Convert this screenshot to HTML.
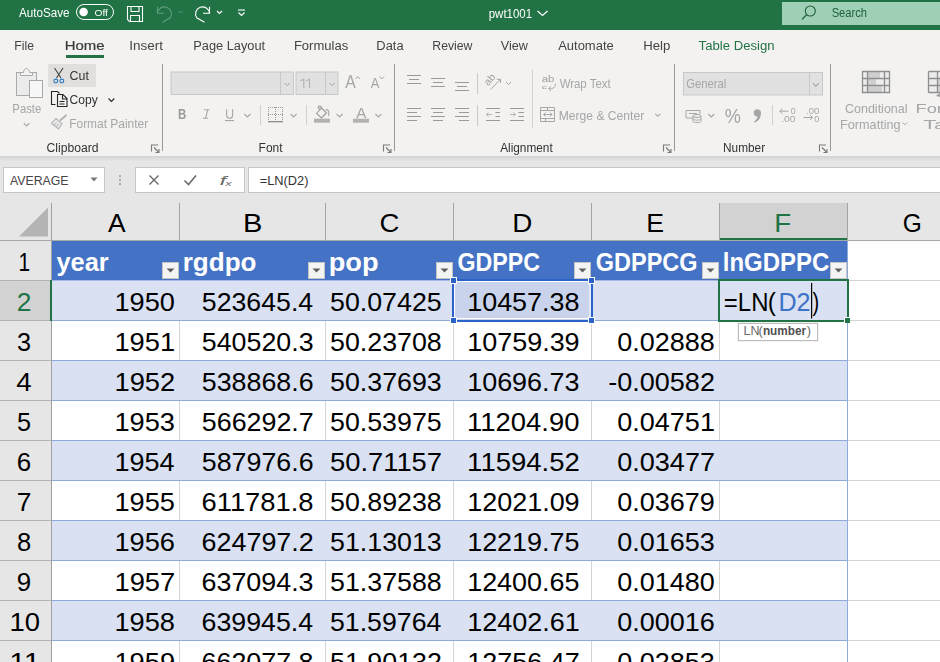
<!DOCTYPE html>
<html><head><meta charset="utf-8"><style>
html,body{margin:0;padding:0;width:940px;height:662px;overflow:hidden;background:#e6e6e6}
svg{display:block}
text{font-family:"Liberation Sans",sans-serif}
</style></head><body>
<svg width="940" height="662" viewBox="0 0 940 662">
<defs><filter id="gs" x="0" y="0" width="940" height="160" filterUnits="userSpaceOnUse"><feColorMatrix type="identity"/></filter><linearGradient id="shad" x1="0" y1="0" x2="0" y2="1"><stop offset="0" stop-color="#d2d2d2"/><stop offset="1" stop-color="#e6e6e6"/></linearGradient></defs>
<g filter="url(#gs)">
<rect x="0" y="0" width="940" height="30" fill="#217346" />
<text x="18.97" y="17.00" font-size="12.51" textLength="50.54" lengthAdjust="spacingAndGlyphs" fill="#fff" >AutoSave</text>
<rect x="76.5" y="4.5" width="37" height="15" rx="7.5" fill="none" stroke="#fff" stroke-width="1"/>
<circle cx="83.6" cy="12" r="4.3" fill="#fff"/>
<text x="94.51" y="16.00" font-size="9.60" textLength="13.47" lengthAdjust="spacingAndGlyphs" fill="#fff" >Off</text>
<path d="M127.5 6.5 H142.5 V21.5 H129.5 L127.5 19.5 Z" stroke="#fff" fill="none" stroke-width="1.1" />
<path d="M131 6.5 V11.5 H139 V6.5" stroke="#fff" fill="none" stroke-width="1.1" />
<path d="M130.5 21.5 V15.5 H139.5 V21.5" stroke="#fff" fill="none" stroke-width="1.1" />
<path d="M157.5 6.7 V13.3 H164 M157.5 13.3 A7 7 0 1 1 170.3 17.8 L162.5 22.3" stroke="#5f9f7a" fill="none" stroke-width="1.1" />
<path d="M178.5 11 L180.5 13 L182.5 11" stroke="#5f9f7a" fill="none" stroke-width="1" />
<path d="M209.5 6.7 V13.3 H203 M209.5 13.3 A7 7 0 1 0 196.7 17.8 L204.5 22.3" stroke="#fff" fill="none" stroke-width="1.1" />
<path d="M217 11 L219.5 13.5 L222 11" stroke="#fff" fill="none" stroke-width="1.2" />
<path d="M238 10 H245" stroke="#fff" fill="none" stroke-width="1.1" />
<path d="M238.5 12.5 L241.5 15.5 L244.5 12.5" stroke="#fff" fill="none" stroke-width="1.1" />
<text x="488.76" y="18.00" font-size="13.24" textLength="43.30" lengthAdjust="spacingAndGlyphs" fill="#fff" >pwt1001</text>
<path d="M537.5 11 L542.5 15.5 L547.5 11" stroke="#fff" fill="none" stroke-width="1.2" />
<rect x="782" y="2" width="158" height="23" fill="#9fcfb4" />
<circle cx="810.3" cy="11" r="5" fill="none" stroke="#1c5e3a" stroke-width="1.1"/>
<path d="M806.8 14.5 L802 19.3" stroke="#1c5e3a" fill="none" stroke-width="1.2" />
<text x="831.70" y="17.20" font-size="13.09" textLength="35.31" lengthAdjust="spacingAndGlyphs" fill="#1c5e3a" >Search</text>
<rect x="0" y="30" width="940" height="126" fill="#f3f2f1" />
<text x="14.29" y="49.80" font-size="13.09" textLength="19.64" lengthAdjust="spacingAndGlyphs" fill="#444444" >File</text>
<text x="64.77" y="49.80" font-size="13.09" textLength="39.87" lengthAdjust="spacingAndGlyphs" fill="#3a3a3a" stroke="#3a3a3a" stroke-width="0.2">Home</text>
<text x="129.35" y="49.80" font-size="13.09" textLength="33.76" lengthAdjust="spacingAndGlyphs" fill="#444444" >Insert</text>
<text x="193.24" y="49.80" font-size="13.09" textLength="71.86" lengthAdjust="spacingAndGlyphs" fill="#444444" >Page Layout</text>
<text x="293.92" y="49.80" font-size="13.09" textLength="54.33" lengthAdjust="spacingAndGlyphs" fill="#444444" >Formulas</text>
<text x="376.34" y="49.80" font-size="13.09" textLength="27.26" lengthAdjust="spacingAndGlyphs" fill="#444444" >Data</text>
<text x="432.29" y="49.80" font-size="13.09" textLength="40.17" lengthAdjust="spacingAndGlyphs" fill="#444444" >Review</text>
<text x="500.74" y="49.80" font-size="13.09" textLength="27.23" lengthAdjust="spacingAndGlyphs" fill="#444444" >View</text>
<text x="558.17" y="49.80" font-size="13.09" textLength="55.59" lengthAdjust="spacingAndGlyphs" fill="#444444" >Automate</text>
<text x="643.21" y="49.80" font-size="13.09" textLength="27.14" lengthAdjust="spacingAndGlyphs" fill="#444444" >Help</text>
<text x="698.60" y="49.80" font-size="13.09" textLength="75.94" lengthAdjust="spacingAndGlyphs" fill="#217346" >Table Design</text>
<rect x="66" y="55" width="38" height="3" fill="#217346" />
<rect x="16.5" y="72.5" width="20" height="23" fill="#ebebeb" stroke="#a9a9a9" stroke-width="1"/>
<path d="M20.5 75.5 V72.5 H23.5 C23.5 70.3 24.8 68.5 26.5 68.5 C28.2 68.5 29.5 70.3 29.5 72.5 H32.5 V75.5 Z" stroke="#a9a9a9" fill="#f4f4f4" stroke-width="1" />
<rect x="29.5" y="80.5" width="13" height="17" fill="#f7f7f7" stroke="#a9a9a9" stroke-width="1"/>
<text x="12.37" y="113.00" font-size="12.22" textLength="28.94" lengthAdjust="spacingAndGlyphs" fill="#a6a6a6" >Paste</text>
<path d="M23.8 123.2 L26.6 126 L29.4 123.2" stroke="#a6a6a6" fill="none" stroke-width="1.1" />
<rect x="48" y="64" width="48" height="23" fill="#e1dfdd" />
<path d="M54.5 68 L61 78 M63 68 L56.5 78" stroke="#444" fill="none" stroke-width="1.1" />
<circle cx="55.8" cy="81" r="1.9" fill="none" stroke="#2b79c2" stroke-width="1.1"/>
<circle cx="61.8" cy="81" r="1.9" fill="none" stroke="#2b79c2" stroke-width="1.1"/>
<text x="69.58" y="80.40" font-size="12.95" textLength="19.33" lengthAdjust="spacingAndGlyphs" fill="#333333" >Cut</text>
<path d="M55.5 104.5 H51.5 V91.5 H57.5 L59.5 93.5" stroke="#262626" fill="none" stroke-width="1.1" />
<path d="M57.5 94.5 H63 L67 98.5 V106.5 H57.5 Z M62.5 94.5 V99 H67 M59.5 101.5 H64.5 M59.5 104 H64.5" stroke="#262626" fill="none" stroke-width="1.1" />
<text x="69.60" y="103.90" font-size="12.65" textLength="28.23" lengthAdjust="spacingAndGlyphs" fill="#333333" >Copy</text>
<path d="M108.5 98.5 L111.4 101.4 L114.3 98.5" stroke="#262626" fill="none" stroke-width="1.1" />
<path d="M60 120.5 L66.5 115" stroke="#b3b3b3" fill="none" stroke-width="2" />
<path d="M56 118.5 L62 123.5 L58.5 129 L51.5 123.5 Z" stroke="#b3b3b3" fill="#e9e9e9" stroke-width="1.1" />
<path d="M54 125.5 L56.5 122.5 M56 127 L58.5 124" stroke="#b3b3b3" fill="none" stroke-width="1" />
<text x="69.21" y="128.40" font-size="12.65" textLength="78.98" lengthAdjust="spacingAndGlyphs" fill="#a6a6a6" >Format Painter</text>
<text x="46.59" y="152.40" font-size="12.51" textLength="51.97" lengthAdjust="spacingAndGlyphs" fill="#333333" >Clipboard</text>
<path d="M151.5 151.5 V145 H158.0 M154.0 147.5 L159.0 152.5 M159.0 149 V152.5 H155.5" stroke="#7a7a7a" fill="none" stroke-width="1.1" />
<line x1="162.5" y1="64" x2="162.5" y2="151" stroke="#9a9a9a" stroke-width="1" />
<rect x="171" y="72" width="122.5" height="22.5" fill="#e1e1e1" stroke="#c8c8c8" stroke-width="1"/>
<line x1="280.5" y1="72" x2="280.5" y2="94.5" stroke="#c8c8c8" stroke-width="1" />
<path d="M284.5 83 L287.2 85.7 L289.9 83" stroke="#a6a6a6" fill="none" stroke-width="1" />
<rect x="296" y="72" width="42" height="22.5" fill="#e1e1e1" stroke="#c8c8c8" stroke-width="1"/>
<line x1="325.5" y1="72" x2="325.5" y2="94.5" stroke="#c8c8c8" stroke-width="1" />
<path d="M329.5 83 L332.2 85.7 L334.9 83" stroke="#a6a6a6" fill="none" stroke-width="1" />
<path d="M300.5 80.8 L303.8 79.3 V88.1 M306.2 80.8 L309.5 79.3 V88.1" stroke="#b0b0b0" fill="none" stroke-width="1.1" />
<text x="345.36" y="87.90" font-size="18.76" textLength="10.47" lengthAdjust="spacingAndGlyphs" fill="#a6a6a6" >A</text>
<path d="M355.5 79 L357.7 76.5 L359.9 79" stroke="#a6a6a6" fill="none" stroke-width="1" />
<text x="370.67" y="87.90" font-size="14.11" textLength="8.66" lengthAdjust="spacingAndGlyphs" fill="#a6a6a6" >A</text>
<path d="M379.5 76.5 L381.8 79 L384.1 76.5" stroke="#a6a6a6" fill="none" stroke-width="1" />
<text x="178.03" y="118.70" font-size="13.96" textLength="8.29" lengthAdjust="spacingAndGlyphs" fill="#999999" font-weight="bold" >B</text>
<path d="M204.2 109.8 H209.4 M203 118.3 H208 M207.8 109.8 L205.4 118.3" stroke="#a6a6a6" fill="none" stroke-width="1.1" />
<path d="M226.6 109.3 V115.3 C226.6 117.3 227.9 118.3 229.6 118.3 C231.3 118.3 232.6 117.3 232.6 115.3 V109.3" stroke="#a6a6a6" fill="none" stroke-width="1.1" />
<rect x="225" y="120" width="9" height="1.1" fill="#a6a6a6" />
<path d="M244.4 114 L247.4 117 L250.4 114" stroke="#a6a6a6" fill="none" stroke-width="1.1" />
<line x1="260.5" y1="105" x2="260.5" y2="125" stroke="#d0d0d0" stroke-width="1" />
<rect x="268" y="107" width="1" height="1" fill="#9a9a9a" />
<rect x="268" y="114" width="1" height="1" fill="#9a9a9a" />
<rect x="270" y="107" width="1" height="1" fill="#9a9a9a" />
<rect x="270" y="114" width="1" height="1" fill="#9a9a9a" />
<rect x="272" y="107" width="1" height="1" fill="#9a9a9a" />
<rect x="272" y="114" width="1" height="1" fill="#9a9a9a" />
<rect x="274" y="107" width="1" height="1" fill="#9a9a9a" />
<rect x="274" y="114" width="1" height="1" fill="#9a9a9a" />
<rect x="276" y="107" width="1" height="1" fill="#9a9a9a" />
<rect x="276" y="114" width="1" height="1" fill="#9a9a9a" />
<rect x="278" y="107" width="1" height="1" fill="#9a9a9a" />
<rect x="278" y="114" width="1" height="1" fill="#9a9a9a" />
<rect x="280" y="107" width="1" height="1" fill="#9a9a9a" />
<rect x="280" y="114" width="1" height="1" fill="#9a9a9a" />
<rect x="282" y="107" width="1" height="1" fill="#9a9a9a" />
<rect x="282" y="114" width="1" height="1" fill="#9a9a9a" />
<rect x="268" y="107" width="1" height="1" fill="#9a9a9a" />
<rect x="275" y="107" width="1" height="1" fill="#9a9a9a" />
<rect x="282" y="107" width="1" height="1" fill="#9a9a9a" />
<rect x="268" y="109" width="1" height="1" fill="#9a9a9a" />
<rect x="275" y="109" width="1" height="1" fill="#9a9a9a" />
<rect x="282" y="109" width="1" height="1" fill="#9a9a9a" />
<rect x="268" y="111" width="1" height="1" fill="#9a9a9a" />
<rect x="275" y="111" width="1" height="1" fill="#9a9a9a" />
<rect x="282" y="111" width="1" height="1" fill="#9a9a9a" />
<rect x="268" y="113" width="1" height="1" fill="#9a9a9a" />
<rect x="275" y="113" width="1" height="1" fill="#9a9a9a" />
<rect x="282" y="113" width="1" height="1" fill="#9a9a9a" />
<rect x="268" y="115" width="1" height="1" fill="#9a9a9a" />
<rect x="275" y="115" width="1" height="1" fill="#9a9a9a" />
<rect x="282" y="115" width="1" height="1" fill="#9a9a9a" />
<rect x="268" y="117" width="1" height="1" fill="#9a9a9a" />
<rect x="275" y="117" width="1" height="1" fill="#9a9a9a" />
<rect x="282" y="117" width="1" height="1" fill="#9a9a9a" />
<rect x="268" y="119" width="1" height="1" fill="#9a9a9a" />
<rect x="275" y="119" width="1" height="1" fill="#9a9a9a" />
<rect x="282" y="119" width="1" height="1" fill="#9a9a9a" />
<rect x="268" y="121" width="15" height="1.3" fill="#8a8a8a" />
<path d="M290.6 114 L293.6 117 L296.6 114" stroke="#a6a6a6" fill="none" stroke-width="1.1" />
<line x1="306.5" y1="105" x2="306.5" y2="125" stroke="#d0d0d0" stroke-width="1" />
<path d="M316.5 113.5 L321.5 108 L326.5 113 L321.5 118 Z M320 109.5 L318.5 108 C317.5 107 319.5 105.5 320.5 106.5 L322 108" stroke="#9a9a9a" fill="none" stroke-width="1.1" />
<path d="M325.5 110 C327.5 109 329 110.5 328.8 113.5 L328.5 116" stroke="#a6a6a6" fill="none" stroke-width="1.1" />
<rect x="314" y="118.7" width="16" height="4" fill="#b3b0ad" />
<path d="M336.6 114 L339.6 117 L342.6 114" stroke="#a6a6a6" fill="none" stroke-width="1.1" />
<text x="356.26" y="118.00" font-size="15.27" textLength="10.07" lengthAdjust="spacingAndGlyphs" fill="#a6a6a6" >A</text>
<rect x="353" y="118.7" width="16" height="4" fill="#b3b0ad" />
<path d="M375.4 114 L378.4 117 L381.4 114" stroke="#a6a6a6" fill="none" stroke-width="1.1" />
<text x="258.61" y="152.40" font-size="12.51" textLength="23.99" lengthAdjust="spacingAndGlyphs" fill="#333333" >Font</text>
<path d="M383.5 151.5 V145 H390.0 M386.0 147.5 L391.0 152.5 M391.0 149 V152.5 H387.5" stroke="#7a7a7a" fill="none" stroke-width="1.1" />
<line x1="394.5" y1="64" x2="394.5" y2="151" stroke="#9a9a9a" stroke-width="1" />
<path d="M407 75.5 H421 M409 79.5 H419 M407 83.5 H421" stroke="#999999" fill="none" stroke-width="1" />
<path d="M431 78.5 H445 M433 82.5 H443 M431 86.5 H445" stroke="#999999" fill="none" stroke-width="1" />
<path d="M455 82.5 H469 M457 86.5 H467 M455 90.5 H469" stroke="#999999" fill="none" stroke-width="1" />
<line x1="477.5" y1="73" x2="477.5" y2="94" stroke="#c8c8c8" stroke-width="1" />
<text x="483.55" y="83.00" font-size="10.18" textLength="11.91" lengthAdjust="spacingAndGlyphs" fill="#a0a0a0" transform="rotate(-50 489.5 79.5)">ab</text>
<path d="M490.6 89.4 L500.5 79.3 M496.8 79.3 H500.5 V83" stroke="#a6a6a6" fill="none" stroke-width="1" />
<path d="M506 82 L508.5 84.5 L511 82" stroke="#a6a6a6" fill="none" stroke-width="1" />
<line x1="532.5" y1="70" x2="532.5" y2="128" stroke="#d0d0d0" stroke-width="1" />
<text x="541.71" y="82.20" font-size="8.15" textLength="12.77" lengthAdjust="spacingAndGlyphs" fill="#a0a0a0" >ab</text>
<text x="541.75" y="89.40" font-size="6.25" textLength="5.35" lengthAdjust="spacingAndGlyphs" fill="#a0a0a0" >c</text>
<path d="M555.3 83.5 C556 87 553.5 88.8 549 88.8 M551 86.5 L548.5 88.8 L551 91" stroke="#a6a6a6" fill="none" stroke-width="1" />
<text x="559.64" y="88.40" font-size="12.80" textLength="51.04" lengthAdjust="spacingAndGlyphs" fill="#a6a6a6" >Wrap Text</text>
<path d="M407 108.5 H421 M407 112.5 H417 M407 116.5 H421 M407 120.5 H417" stroke="#999999" fill="none" stroke-width="1" />
<path d="M431 108.5 H445 M433 112.5 H443 M431 116.5 H445 M433 120.5 H443" stroke="#999999" fill="none" stroke-width="1" />
<path d="M455 108.5 H469 M459 112.5 H469 M455 116.5 H469 M459 120.5 H469" stroke="#999999" fill="none" stroke-width="1" />
<line x1="477.5" y1="105" x2="477.5" y2="126" stroke="#c8c8c8" stroke-width="1" />
<path d="M486 108.5 H500 M495.5 112.5 H500 M495.5 116.5 H500 M486 120.5 H500" stroke="#999999" fill="none" stroke-width="1" />
<path d="M492 114.5 H486.5 M488.5 112.5 L486.5 114.5 L488.5 116.5" stroke="#b5b5b5" fill="none" stroke-width="1" />
<path d="M510 108.5 H524 M518.5 112.5 H524 M518.5 116.5 H524 M510 120.5 H524" stroke="#999999" fill="none" stroke-width="1" />
<path d="M510 114.5 H515.5 M513.5 112.5 L515.5 114.5 L513.5 116.5" stroke="#b5b5b5" fill="none" stroke-width="1" />
<path d="M540.5 107.5 H554.5 V121.5 H540.5 Z M540.5 110.5 H554.5 M540.5 118.5 H554.5 M547.5 107.5 V110.5 M545.5 118.5 V121.5" stroke="#a6a6a6" fill="none" stroke-width="1" />
<path d="M543.5 114.5 H552 M545.5 112.5 L543.5 114.5 L545.5 116.5 M550 112.5 L552 114.5 L550 116.5" stroke="#a6a6a6" fill="none" stroke-width="1" />
<text x="558.70" y="120.20" font-size="12.80" textLength="85.50" lengthAdjust="spacingAndGlyphs" fill="#a6a6a6" >Merge &amp; Center</text>
<path d="M655.3 113.8 L657.8 116.3 L660.3 113.8" stroke="#a6a6a6" fill="none" stroke-width="1.1" />
<text x="500.17" y="152.40" font-size="12.51" textLength="52.51" lengthAdjust="spacingAndGlyphs" fill="#333333" >Alignment</text>
<path d="M663.5 151.5 V145 H670.0 M666.0 147.5 L671.0 152.5 M671.0 149 V152.5 H667.5" stroke="#7a7a7a" fill="none" stroke-width="1.1" />
<line x1="674.5" y1="64" x2="674.5" y2="151" stroke="#9a9a9a" stroke-width="1" />
<rect x="683.5" y="72.5" width="139" height="22.5" fill="#e1e1e1" stroke="#c8c8c8" stroke-width="1"/>
<line x1="809.5" y1="72.5" x2="809.5" y2="95" stroke="#c8c8c8" stroke-width="1" />
<path d="M812.8 83.2 L815.8 86.2 L818.8 83.2" stroke="#a6a6a6" fill="none" stroke-width="1.1" />
<text x="686.24" y="88.30" font-size="12.95" textLength="40.02" lengthAdjust="spacingAndGlyphs" fill="#a6a6a6" >General</text>
<path d="M686 110.5 H700 V114 M686 110.5 V118 H693 M689 113.5 H697" stroke="#a6a6a6" fill="none" stroke-width="1" />
<ellipse cx="697" cy="116" rx="4" ry="1.5" fill="#f3f2f1" stroke="#a6a6a6" stroke-width="1"/>
<path d="M693 116 V121.5 C693 123 701 123 701 121.5 V116 M693 119 C693 120.5 701 120.5 701 119" stroke="#a6a6a6" fill="none" stroke-width="1" />
<path d="M708.3 114 L711.3 117 L714.3 114" stroke="#a6a6a6" fill="none" stroke-width="1.1" />
<text x="724.86" y="122.60" font-size="21.09" textLength="16.16" lengthAdjust="spacingAndGlyphs" fill="#a6a6a6" >%</text>
<circle cx="757.3" cy="112.8" r="3.6" fill="#a6a6a6"/>
<path d="M760.6 112.5 C761.5 117 759 121 754.5 122.8 L754 121.8 C756.5 120 758 117 757.5 115 Z" stroke="none" fill="#a6a6a6" stroke-width="1" />
<line x1="772.5" y1="105" x2="772.5" y2="125" stroke="#d0d0d0" stroke-width="1" />
<text x="790.65" y="113.60" font-size="9.16" textLength="4.89" lengthAdjust="spacingAndGlyphs" fill="#a6a6a6" >0</text>
<text x="781.17" y="121.50" font-size="9.16" textLength="14.42" lengthAdjust="spacingAndGlyphs" fill="#a6a6a6" >.00</text>
<path d="M779.8 111.2 L782.3 108.7 M779.8 111.2 L782.3 113.7 M779.8 111.2 H788.5" stroke="#a6a6a6" fill="none" stroke-width="1" />
<text x="806.05" y="113.60" font-size="9.16" textLength="13.10" lengthAdjust="spacingAndGlyphs" fill="#a6a6a6" >.00</text>
<text x="814.14" y="121.50" font-size="9.16" textLength="5.01" lengthAdjust="spacingAndGlyphs" fill="#a6a6a6" >0</text>
<path d="M803.7 117.5 H812.5 M810 115 L812.5 117.5 L810 120" stroke="#a6a6a6" fill="none" stroke-width="1" />
<text x="723.02" y="152.40" font-size="12.51" textLength="42.07" lengthAdjust="spacingAndGlyphs" fill="#333333" >Number</text>
<path d="M819.5 151.5 V145 H826.0 M822.0 147.5 L827.0 152.5 M827.0 149 V152.5 H823.5" stroke="#7a7a7a" fill="none" stroke-width="1.1" />
<line x1="830.5" y1="64" x2="830.5" y2="151" stroke="#9a9a9a" stroke-width="1" />
<rect x="862.5" y="71.5" width="27" height="21" fill="#ececec" />
<rect x="868" y="72" width="12" height="6" fill="#cfcfcf" />
<rect x="868" y="79" width="8" height="6" fill="#cfcfcf" />
<rect x="868" y="86" width="14" height="6" fill="#cfcfcf" />
<path d="M862.5 71.5 H889.5 V92.5 H862.5 Z M862.5 78.5 H889.5 M862.5 85.5 H889.5 M867.5 71.5 V92.5 M884.5 71.5 V92.5" stroke="#8f8f8f" fill="none" stroke-width="1.3" />
<text x="844.97" y="113.00" font-size="12.80" textLength="62.55" lengthAdjust="spacingAndGlyphs" fill="#a6a6a6" >Conditional</text>
<text x="840.05" y="129.10" font-size="12.80" textLength="60.56" lengthAdjust="spacingAndGlyphs" fill="#a6a6a6" >Formatting</text>
<path d="M902.5 122.5 L904.8 124.8 L907.1 122.5" stroke="#a6a6a6" fill="none" stroke-width="1" />
<rect x="928.5" y="71.5" width="20" height="21" fill="#ececec" />
<rect x="938" y="79" width="10" height="13" fill="#d4d4d4" />
<path d="M928.5 71.5 H948 M928.5 92.5 H948 M928.5 71.5 V92.5 M928.5 78.5 H948 M928.5 85.5 H948 M937.5 71.5 V92.5" stroke="#8f8f8f" fill="none" stroke-width="1.3" />
<path d="M936 96 C938 93 942 92 944 93 L940 97 Z" stroke="none" fill="#a0a0a0" stroke-width="1" />
<text x="915.49" y="113.00" font-size="12.80" textLength="42.71" lengthAdjust="spacingAndGlyphs" fill="#a6a6a6" >Form</text>
<text x="923.32" y="129.10" font-size="12.80" textLength="34.59" lengthAdjust="spacingAndGlyphs" fill="#a6a6a6" >Tab</text>
</g>
<rect x="0" y="156" width="940" height="506" fill="#e6e6e6" />
<rect x="0" y="156" width="940" height="5" fill="url(#shad)"/>
<rect x="3.5" y="167.5" width="101" height="25" fill="#fff" stroke="#c6c6c6" stroke-width="1"/>
<text x="9.97" y="185.00" font-size="12.80" textLength="58.53" lengthAdjust="spacingAndGlyphs" fill="#444" >AVERAGE</text>
<path d="M90.5 177.5 H97.5 L94 181.5 Z" stroke="none" fill="#777" stroke-width="1" />
<rect x="119" y="175.2" width="2" height="2" fill="#a8a8a8" />
<rect x="119" y="179.2" width="2" height="2" fill="#a8a8a8" />
<rect x="119" y="183" width="2" height="2" fill="#a8a8a8" />
<rect x="135.5" y="167.5" width="109" height="25" fill="#fff" stroke="#c6c6c6" stroke-width="1"/>
<path d="M149.5 175.5 L158.5 184.5 M158.5 175.5 L149.5 184.5" stroke="#6a6a6a" fill="none" stroke-width="1.4" />
<path d="M184.5 180.5 L188.5 184.5 L196 175.5" stroke="#6a6a6a" fill="none" stroke-width="1.6" />
<text x="219.63" y="185.00" font-size="13.09" textLength="6.82" lengthAdjust="spacingAndGlyphs" fill="#6a6a6a" font-style="italic" font-family="Liberation Serif">f</text>
<text x="225.34" y="185.50" font-size="6.55" textLength="6.32" lengthAdjust="spacingAndGlyphs" fill="#6a6a6a" font-style="italic" font-family="Liberation Serif">x</text>
<rect x="248.5" y="167.5" width="700" height="25" fill="#fff" stroke="#c6c6c6" stroke-width="1"/>
<text x="259.79" y="184.90" font-size="12.51" textLength="48.70" lengthAdjust="spacingAndGlyphs" fill="#333333" >=LN(D2)</text>
<rect x="52" y="241" width="888" height="421" fill="#fff" />
<rect x="720" y="203" width="128" height="37" fill="#d2d2d2" />
<line x1="179.5" y1="203" x2="179.5" y2="240" stroke="#a4a4a4" stroke-width="1" />
<line x1="325.5" y1="203" x2="325.5" y2="240" stroke="#a4a4a4" stroke-width="1" />
<line x1="453.5" y1="203" x2="453.5" y2="240" stroke="#a4a4a4" stroke-width="1" />
<line x1="591.5" y1="203" x2="591.5" y2="240" stroke="#a4a4a4" stroke-width="1" />
<line x1="719.5" y1="203" x2="719.5" y2="240" stroke="#a4a4a4" stroke-width="1" />
<line x1="847.5" y1="203" x2="847.5" y2="240" stroke="#a4a4a4" stroke-width="1" />
<line x1="51.5" y1="203" x2="51.5" y2="662" stroke="#a0a0a0" stroke-width="1" />
<line x1="0" y1="240.5" x2="940" y2="240.5" stroke="#a8a8a8" stroke-width="1" />
<rect x="720" y="238" width="128" height="2" fill="#217346" />
<path d="M19 236.5 L48 207.5 V236.5 Z" stroke="none" fill="#b4b4b4" stroke-width="1" />
<text x="107.93" y="232.10" font-size="25.75" textLength="17.62" lengthAdjust="spacingAndGlyphs" fill="#000" >A</text>
<text x="243.10" y="232.10" font-size="25.75" textLength="19.41" lengthAdjust="spacingAndGlyphs" fill="#000" >B</text>
<text x="379.62" y="232.10" font-size="25.75" textLength="19.90" lengthAdjust="spacingAndGlyphs" fill="#000" >C</text>
<text x="512.20" y="232.10" font-size="25.75" textLength="20.11" lengthAdjust="spacingAndGlyphs" fill="#000" >D</text>
<text x="646.29" y="232.10" font-size="25.75" textLength="17.83" lengthAdjust="spacingAndGlyphs" fill="#000" >E</text>
<text x="774.22" y="232.10" font-size="25.75" textLength="16.92" lengthAdjust="spacingAndGlyphs" fill="#217346" >F</text>
<text x="902.77" y="232.10" font-size="25.75" textLength="19.07" lengthAdjust="spacingAndGlyphs" fill="#000" >G</text>
<rect x="0" y="281" width="51" height="39" fill="#d2d2d2" />
<line x1="0" y1="280.5" x2="51" y2="280.5" stroke="#b3b3b3" stroke-width="1" />
<line x1="0" y1="320.5" x2="51" y2="320.5" stroke="#b3b3b3" stroke-width="1" />
<line x1="0" y1="360.5" x2="51" y2="360.5" stroke="#b3b3b3" stroke-width="1" />
<line x1="0" y1="400.5" x2="51" y2="400.5" stroke="#b3b3b3" stroke-width="1" />
<line x1="0" y1="440.5" x2="51" y2="440.5" stroke="#b3b3b3" stroke-width="1" />
<line x1="0" y1="480.5" x2="51" y2="480.5" stroke="#b3b3b3" stroke-width="1" />
<line x1="0" y1="520.5" x2="51" y2="520.5" stroke="#b3b3b3" stroke-width="1" />
<line x1="0" y1="560.5" x2="51" y2="560.5" stroke="#b3b3b3" stroke-width="1" />
<line x1="0" y1="600.5" x2="51" y2="600.5" stroke="#b3b3b3" stroke-width="1" />
<line x1="0" y1="640.5" x2="51" y2="640.5" stroke="#b3b3b3" stroke-width="1" />
<line x1="0" y1="680.5" x2="51" y2="680.5" stroke="#b3b3b3" stroke-width="1" />
<rect x="50" y="280" width="2" height="41" fill="#217346" />
<text x="18.44" y="270.70" font-size="25.75" textLength="11.57" lengthAdjust="spacingAndGlyphs" fill="#000" >1</text>
<text x="16.68" y="310.70" font-size="25.75" textLength="14.67" lengthAdjust="spacingAndGlyphs" fill="#217346" >2</text>
<text x="17.05" y="350.70" font-size="25.75" textLength="14.05" lengthAdjust="spacingAndGlyphs" fill="#000" >3</text>
<text x="16.38" y="390.70" font-size="25.75" textLength="15.42" lengthAdjust="spacingAndGlyphs" fill="#000" >4</text>
<text x="16.99" y="430.70" font-size="25.75" textLength="14.05" lengthAdjust="spacingAndGlyphs" fill="#000" >5</text>
<text x="16.70" y="470.70" font-size="25.75" textLength="14.43" lengthAdjust="spacingAndGlyphs" fill="#000" >6</text>
<text x="16.68" y="510.70" font-size="25.75" textLength="14.67" lengthAdjust="spacingAndGlyphs" fill="#000" >7</text>
<text x="16.91" y="550.70" font-size="25.75" textLength="14.20" lengthAdjust="spacingAndGlyphs" fill="#000" >8</text>
<text x="16.77" y="590.70" font-size="25.75" textLength="14.43" lengthAdjust="spacingAndGlyphs" fill="#000" >9</text>
<text x="9.44" y="630.70" font-size="25.75" textLength="30.55" lengthAdjust="spacingAndGlyphs" fill="#000" >10</text>
<text x="9.25" y="670.70" font-size="25.75" textLength="31.09" lengthAdjust="spacingAndGlyphs" fill="#000" >11</text>
<rect x="52" y="241" width="796" height="39" fill="#4472c4" />
<rect x="52" y="281" width="796" height="39" fill="#d9e1f2" />
<line x1="52" y1="320.5" x2="848" y2="320.5" stroke="#8ea9db" stroke-width="1" />
<line x1="179.5" y1="321" x2="179.5" y2="360" stroke="#d4d4d4" stroke-width="1" />
<line x1="325.5" y1="321" x2="325.5" y2="360" stroke="#d4d4d4" stroke-width="1" />
<line x1="453.5" y1="321" x2="453.5" y2="360" stroke="#d4d4d4" stroke-width="1" />
<line x1="591.5" y1="321" x2="591.5" y2="360" stroke="#d4d4d4" stroke-width="1" />
<line x1="719.5" y1="321" x2="719.5" y2="360" stroke="#d4d4d4" stroke-width="1" />
<line x1="52" y1="360.5" x2="848" y2="360.5" stroke="#8ea9db" stroke-width="1" />
<rect x="52" y="361" width="796" height="39" fill="#d9e1f2" />
<line x1="52" y1="400.5" x2="848" y2="400.5" stroke="#8ea9db" stroke-width="1" />
<line x1="179.5" y1="401" x2="179.5" y2="440" stroke="#d4d4d4" stroke-width="1" />
<line x1="325.5" y1="401" x2="325.5" y2="440" stroke="#d4d4d4" stroke-width="1" />
<line x1="453.5" y1="401" x2="453.5" y2="440" stroke="#d4d4d4" stroke-width="1" />
<line x1="591.5" y1="401" x2="591.5" y2="440" stroke="#d4d4d4" stroke-width="1" />
<line x1="719.5" y1="401" x2="719.5" y2="440" stroke="#d4d4d4" stroke-width="1" />
<line x1="52" y1="440.5" x2="848" y2="440.5" stroke="#8ea9db" stroke-width="1" />
<rect x="52" y="441" width="796" height="39" fill="#d9e1f2" />
<line x1="52" y1="480.5" x2="848" y2="480.5" stroke="#8ea9db" stroke-width="1" />
<line x1="179.5" y1="481" x2="179.5" y2="520" stroke="#d4d4d4" stroke-width="1" />
<line x1="325.5" y1="481" x2="325.5" y2="520" stroke="#d4d4d4" stroke-width="1" />
<line x1="453.5" y1="481" x2="453.5" y2="520" stroke="#d4d4d4" stroke-width="1" />
<line x1="591.5" y1="481" x2="591.5" y2="520" stroke="#d4d4d4" stroke-width="1" />
<line x1="719.5" y1="481" x2="719.5" y2="520" stroke="#d4d4d4" stroke-width="1" />
<line x1="52" y1="520.5" x2="848" y2="520.5" stroke="#8ea9db" stroke-width="1" />
<rect x="52" y="521" width="796" height="39" fill="#d9e1f2" />
<line x1="52" y1="560.5" x2="848" y2="560.5" stroke="#8ea9db" stroke-width="1" />
<line x1="179.5" y1="561" x2="179.5" y2="600" stroke="#d4d4d4" stroke-width="1" />
<line x1="325.5" y1="561" x2="325.5" y2="600" stroke="#d4d4d4" stroke-width="1" />
<line x1="453.5" y1="561" x2="453.5" y2="600" stroke="#d4d4d4" stroke-width="1" />
<line x1="591.5" y1="561" x2="591.5" y2="600" stroke="#d4d4d4" stroke-width="1" />
<line x1="719.5" y1="561" x2="719.5" y2="600" stroke="#d4d4d4" stroke-width="1" />
<line x1="52" y1="600.5" x2="848" y2="600.5" stroke="#8ea9db" stroke-width="1" />
<rect x="52" y="601" width="796" height="39" fill="#d9e1f2" />
<line x1="52" y1="640.5" x2="848" y2="640.5" stroke="#8ea9db" stroke-width="1" />
<line x1="179.5" y1="641" x2="179.5" y2="680" stroke="#d4d4d4" stroke-width="1" />
<line x1="325.5" y1="641" x2="325.5" y2="680" stroke="#d4d4d4" stroke-width="1" />
<line x1="453.5" y1="641" x2="453.5" y2="680" stroke="#d4d4d4" stroke-width="1" />
<line x1="591.5" y1="641" x2="591.5" y2="680" stroke="#d4d4d4" stroke-width="1" />
<line x1="719.5" y1="641" x2="719.5" y2="680" stroke="#d4d4d4" stroke-width="1" />
<line x1="52" y1="680.5" x2="848" y2="680.5" stroke="#8ea9db" stroke-width="1" />
<line x1="847.5" y1="281" x2="847.5" y2="320" stroke="#8ea9db" stroke-width="1" />
<line x1="847.5" y1="321" x2="847.5" y2="360" stroke="#8ea9db" stroke-width="1" />
<line x1="847.5" y1="361" x2="847.5" y2="400" stroke="#8ea9db" stroke-width="1" />
<line x1="847.5" y1="401" x2="847.5" y2="440" stroke="#8ea9db" stroke-width="1" />
<line x1="847.5" y1="441" x2="847.5" y2="480" stroke="#8ea9db" stroke-width="1" />
<line x1="847.5" y1="481" x2="847.5" y2="520" stroke="#8ea9db" stroke-width="1" />
<line x1="847.5" y1="521" x2="847.5" y2="560" stroke="#8ea9db" stroke-width="1" />
<line x1="847.5" y1="561" x2="847.5" y2="600" stroke="#8ea9db" stroke-width="1" />
<line x1="847.5" y1="601" x2="847.5" y2="640" stroke="#8ea9db" stroke-width="1" />
<line x1="847.5" y1="641" x2="847.5" y2="680" stroke="#8ea9db" stroke-width="1" />
<line x1="848" y1="280.5" x2="940" y2="280.5" stroke="#d4d4d4" stroke-width="1" />
<line x1="848" y1="320.5" x2="940" y2="320.5" stroke="#d4d4d4" stroke-width="1" />
<line x1="848" y1="360.5" x2="940" y2="360.5" stroke="#d4d4d4" stroke-width="1" />
<line x1="848" y1="400.5" x2="940" y2="400.5" stroke="#d4d4d4" stroke-width="1" />
<line x1="848" y1="440.5" x2="940" y2="440.5" stroke="#d4d4d4" stroke-width="1" />
<line x1="848" y1="480.5" x2="940" y2="480.5" stroke="#d4d4d4" stroke-width="1" />
<line x1="848" y1="520.5" x2="940" y2="520.5" stroke="#d4d4d4" stroke-width="1" />
<line x1="848" y1="560.5" x2="940" y2="560.5" stroke="#d4d4d4" stroke-width="1" />
<line x1="848" y1="600.5" x2="940" y2="600.5" stroke="#d4d4d4" stroke-width="1" />
<line x1="848" y1="640.5" x2="940" y2="640.5" stroke="#d4d4d4" stroke-width="1" />
<line x1="848" y1="680.5" x2="940" y2="680.5" stroke="#d4d4d4" stroke-width="1" />
<line x1="847.5" y1="203" x2="847.5" y2="240" stroke="#a4a4a4" stroke-width="1" />
<line x1="847.5" y1="241" x2="847.5" y2="662" stroke="#8ea9db" stroke-width="1" />
<line x1="52" y1="280.5" x2="848" y2="280.5" stroke="#a3b9e4" stroke-width="1" />
<rect x="454" y="281" width="138" height="39" fill="#c9d4ec" />
<text x="56.51" y="270.80" font-size="25.45" textLength="52.18" lengthAdjust="spacingAndGlyphs" fill="#fff" font-weight="bold" >year</text>
<text x="182.71" y="270.80" font-size="25.45" textLength="73.77" lengthAdjust="spacingAndGlyphs" fill="#fff" font-weight="bold" >rgdpo</text>
<text x="328.73" y="270.80" font-size="25.45" textLength="49.86" lengthAdjust="spacingAndGlyphs" fill="#fff" font-weight="bold" >pop</text>
<text x="457.57" y="270.80" font-size="25.45" textLength="82.43" lengthAdjust="spacingAndGlyphs" fill="#fff" font-weight="bold" >GDPPC</text>
<text x="595.86" y="270.80" font-size="25.45" textLength="101.64" lengthAdjust="spacingAndGlyphs" fill="#fff" font-weight="bold" >GDPPCG</text>
<text x="722.82" y="270.80" font-size="25.45" textLength="106.53" lengthAdjust="spacingAndGlyphs" fill="#fff" font-weight="bold" >lnGDPPC</text>
<rect x="162.5" y="262.5" width="16" height="16" fill="#f4f4f4" stroke="#c4c4c4" stroke-width="1"/>
<path d="M166.5 268.5 H174.5 L170.5 272.5 Z" stroke="none" fill="#5f5f5f" stroke-width="1" />
<rect x="308.5" y="262.5" width="16" height="16" fill="#f4f4f4" stroke="#c4c4c4" stroke-width="1"/>
<path d="M312.5 268.5 H320.5 L316.5 272.5 Z" stroke="none" fill="#5f5f5f" stroke-width="1" />
<rect x="436.5" y="262.5" width="16" height="16" fill="#f4f4f4" stroke="#c4c4c4" stroke-width="1"/>
<path d="M440.5 268.5 H448.5 L444.5 272.5 Z" stroke="none" fill="#5f5f5f" stroke-width="1" />
<rect x="574.5" y="262.5" width="16" height="16" fill="#f4f4f4" stroke="#c4c4c4" stroke-width="1"/>
<path d="M578.5 268.5 H586.5 L582.5 272.5 Z" stroke="none" fill="#5f5f5f" stroke-width="1" />
<rect x="702.5" y="262.5" width="16" height="16" fill="#f4f4f4" stroke="#c4c4c4" stroke-width="1"/>
<path d="M706.5 268.5 H714.5 L710.5 272.5 Z" stroke="none" fill="#5f5f5f" stroke-width="1" />
<rect x="830.5" y="262.5" width="16" height="16" fill="#f4f4f4" stroke="#c4c4c4" stroke-width="1"/>
<path d="M834.5 268.5 H842.5 L838.5 272.5 Z" stroke="none" fill="#5f5f5f" stroke-width="1" />
<text x="114.46" y="310.70" font-size="25.89" textLength="60.41" lengthAdjust="spacingAndGlyphs" fill="#000" >1950</text>
<text x="201.83" y="310.70" font-size="25.89" textLength="111.33" lengthAdjust="spacingAndGlyphs" fill="#000" >523645.4</text>
<text x="330.03" y="310.70" font-size="25.89" textLength="111.67" lengthAdjust="spacingAndGlyphs" fill="#000" >50.07425</text>
<text x="467.18" y="310.70" font-size="25.89" textLength="112.39" lengthAdjust="spacingAndGlyphs" fill="#000" >10457.38</text>
<text x="114.45" y="350.70" font-size="25.89" textLength="60.70" lengthAdjust="spacingAndGlyphs" fill="#000" >1951</text>
<text x="201.83" y="350.70" font-size="25.89" textLength="111.74" lengthAdjust="spacingAndGlyphs" fill="#000" >540520.3</text>
<text x="330.03" y="350.70" font-size="25.89" textLength="111.74" lengthAdjust="spacingAndGlyphs" fill="#000" >50.23708</text>
<text x="467.18" y="350.70" font-size="25.89" textLength="112.46" lengthAdjust="spacingAndGlyphs" fill="#000" >10759.39</text>
<text x="617.22" y="350.70" font-size="25.89" textLength="97.59" lengthAdjust="spacingAndGlyphs" fill="#000" >0.02888</text>
<text x="114.45" y="390.70" font-size="25.89" textLength="60.77" lengthAdjust="spacingAndGlyphs" fill="#000" >1952</text>
<text x="201.83" y="390.70" font-size="25.89" textLength="111.74" lengthAdjust="spacingAndGlyphs" fill="#000" >538868.6</text>
<text x="330.03" y="390.70" font-size="25.89" textLength="111.74" lengthAdjust="spacingAndGlyphs" fill="#000" >50.37693</text>
<text x="467.18" y="390.70" font-size="25.89" textLength="112.39" lengthAdjust="spacingAndGlyphs" fill="#000" >10696.73</text>
<text x="608.18" y="390.70" font-size="25.89" textLength="106.78" lengthAdjust="spacingAndGlyphs" fill="#000" >-0.00582</text>
<text x="114.46" y="430.70" font-size="25.89" textLength="60.56" lengthAdjust="spacingAndGlyphs" fill="#000" >1953</text>
<text x="201.83" y="430.70" font-size="25.89" textLength="111.94" lengthAdjust="spacingAndGlyphs" fill="#000" >566292.7</text>
<text x="330.03" y="430.70" font-size="25.89" textLength="111.67" lengthAdjust="spacingAndGlyphs" fill="#000" >50.53975</text>
<text x="467.14" y="430.70" font-size="25.89" textLength="112.34" lengthAdjust="spacingAndGlyphs" fill="#000" >11204.90</text>
<text x="617.22" y="430.70" font-size="25.89" textLength="97.73" lengthAdjust="spacingAndGlyphs" fill="#000" >0.04751</text>
<text x="114.47" y="470.70" font-size="25.89" textLength="60.13" lengthAdjust="spacingAndGlyphs" fill="#000" >1954</text>
<text x="201.83" y="470.70" font-size="25.89" textLength="111.74" lengthAdjust="spacingAndGlyphs" fill="#000" >587976.6</text>
<text x="330.01" y="470.70" font-size="25.89" textLength="112.01" lengthAdjust="spacingAndGlyphs" fill="#000" >50.71157</text>
<text x="467.14" y="470.70" font-size="25.89" textLength="112.69" lengthAdjust="spacingAndGlyphs" fill="#000" >11594.52</text>
<text x="617.22" y="470.70" font-size="25.89" textLength="97.80" lengthAdjust="spacingAndGlyphs" fill="#000" >0.03477</text>
<text x="114.46" y="510.70" font-size="25.89" textLength="60.49" lengthAdjust="spacingAndGlyphs" fill="#000" >1955</text>
<text x="201.53" y="510.70" font-size="25.89" textLength="112.08" lengthAdjust="spacingAndGlyphs" fill="#000" >611781.8</text>
<text x="330.03" y="510.70" font-size="25.89" textLength="111.74" lengthAdjust="spacingAndGlyphs" fill="#000" >50.89238</text>
<text x="467.18" y="510.70" font-size="25.89" textLength="112.46" lengthAdjust="spacingAndGlyphs" fill="#000" >12021.09</text>
<text x="617.22" y="510.70" font-size="25.89" textLength="97.66" lengthAdjust="spacingAndGlyphs" fill="#000" >0.03679</text>
<text x="114.46" y="550.70" font-size="25.89" textLength="60.56" lengthAdjust="spacingAndGlyphs" fill="#000" >1956</text>
<text x="201.55" y="550.70" font-size="25.89" textLength="112.22" lengthAdjust="spacingAndGlyphs" fill="#000" >624797.2</text>
<text x="330.03" y="550.70" font-size="25.89" textLength="111.74" lengthAdjust="spacingAndGlyphs" fill="#000" >51.13013</text>
<text x="467.18" y="550.70" font-size="25.89" textLength="112.33" lengthAdjust="spacingAndGlyphs" fill="#000" >12219.75</text>
<text x="617.22" y="550.70" font-size="25.89" textLength="97.59" lengthAdjust="spacingAndGlyphs" fill="#000" >0.01653</text>
<text x="114.45" y="590.70" font-size="25.89" textLength="60.77" lengthAdjust="spacingAndGlyphs" fill="#000" >1957</text>
<text x="201.56" y="590.70" font-size="25.89" textLength="112.01" lengthAdjust="spacingAndGlyphs" fill="#000" >637094.3</text>
<text x="330.03" y="590.70" font-size="25.89" textLength="111.74" lengthAdjust="spacingAndGlyphs" fill="#000" >51.37588</text>
<text x="467.18" y="590.70" font-size="25.89" textLength="112.33" lengthAdjust="spacingAndGlyphs" fill="#000" >12400.65</text>
<text x="617.22" y="590.70" font-size="25.89" textLength="97.45" lengthAdjust="spacingAndGlyphs" fill="#000" >0.01480</text>
<text x="114.46" y="630.70" font-size="25.89" textLength="60.56" lengthAdjust="spacingAndGlyphs" fill="#000" >1958</text>
<text x="201.56" y="630.70" font-size="25.89" textLength="111.60" lengthAdjust="spacingAndGlyphs" fill="#000" >639945.4</text>
<text x="330.03" y="630.70" font-size="25.89" textLength="111.33" lengthAdjust="spacingAndGlyphs" fill="#000" >51.59764</text>
<text x="467.18" y="630.70" font-size="25.89" textLength="112.53" lengthAdjust="spacingAndGlyphs" fill="#000" >12402.61</text>
<text x="617.22" y="630.70" font-size="25.89" textLength="97.59" lengthAdjust="spacingAndGlyphs" fill="#000" >0.00016</text>
<text x="114.46" y="670.70" font-size="25.89" textLength="60.63" lengthAdjust="spacingAndGlyphs" fill="#000" >1959</text>
<text x="201.56" y="670.70" font-size="25.89" textLength="112.01" lengthAdjust="spacingAndGlyphs" fill="#000" >662077.8</text>
<text x="330.03" y="670.70" font-size="25.89" textLength="111.94" lengthAdjust="spacingAndGlyphs" fill="#000" >51.90132</text>
<text x="467.18" y="670.70" font-size="25.89" textLength="112.60" lengthAdjust="spacingAndGlyphs" fill="#000" >12756.47</text>
<text x="617.22" y="670.70" font-size="25.89" textLength="97.59" lengthAdjust="spacingAndGlyphs" fill="#000" >0.02853</text>
<rect x="454.5" y="281.5" width="135.5" height="37" fill="none" stroke="#fff" stroke-width="1"/>
<rect x="453" y="280" width="139" height="41" fill="none" stroke="#2a62c9" stroke-width="2"/>
<rect x="450.0" y="277.0" width="7" height="7" fill="#fff" />
<rect x="451.0" y="278.0" width="5" height="5" fill="#2a62c9" />
<rect x="588.0" y="277.0" width="7" height="7" fill="#fff" />
<rect x="589.0" y="278.0" width="5" height="5" fill="#2a62c9" />
<rect x="450.0" y="317.0" width="7" height="7" fill="#fff" />
<rect x="451.0" y="318.0" width="5" height="5" fill="#2a62c9" />
<rect x="588.0" y="317.0" width="7" height="7" fill="#fff" />
<rect x="589.0" y="318.0" width="5" height="5" fill="#2a62c9" />
<rect x="719" y="280" width="129" height="41" fill="none" stroke="#217346" stroke-width="2"/>
<rect x="844" y="317" width="6" height="6" fill="#fff" />
<rect x="845" y="318" width="5" height="5" fill="#217346" />
<text x="723.86" y="311.00" font-size="26.33" textLength="44.61" lengthAdjust="spacingAndGlyphs" fill="#000" >=LN</text>
<text x="767.87" y="311.00" font-size="26.33" textLength="8.17" lengthAdjust="spacingAndGlyphs" fill="#000" >(</text>
<text x="778.43" y="311.00" font-size="26.33" textLength="32.04" lengthAdjust="spacingAndGlyphs" fill="#3d72c9" >D2</text>
<text x="812.55" y="311.00" font-size="26.33" textLength="6.66" lengthAdjust="spacingAndGlyphs" fill="#000" >)</text>
<rect x="811" y="283" width="1.2" height="35.5" fill="#000" />
<rect x="737.5" y="322.5" width="81" height="19" fill="#e8e8e8" />
<rect x="738.5" y="323.5" width="79" height="17" fill="#fff" stroke="#bdbdbd" stroke-width="1"/>
<text x="743.57" y="334.80" font-size="12.51" textLength="15.97" lengthAdjust="spacingAndGlyphs" fill="#6a6a6a" >LN</text>
<text x="758.60" y="334.80" font-size="12.51" textLength="4.27" lengthAdjust="spacingAndGlyphs" fill="#6a6a6a" transform="translate(0,0)">(</text>
<text x="762.94" y="334.80" font-size="12.51" textLength="43.14" lengthAdjust="spacingAndGlyphs" fill="#505050" font-weight="bold" >number</text>
<text x="806.70" y="334.80" font-size="12.51" textLength="4.27" lengthAdjust="spacingAndGlyphs" fill="#6a6a6a" >)</text>
</svg>
</body></html>
